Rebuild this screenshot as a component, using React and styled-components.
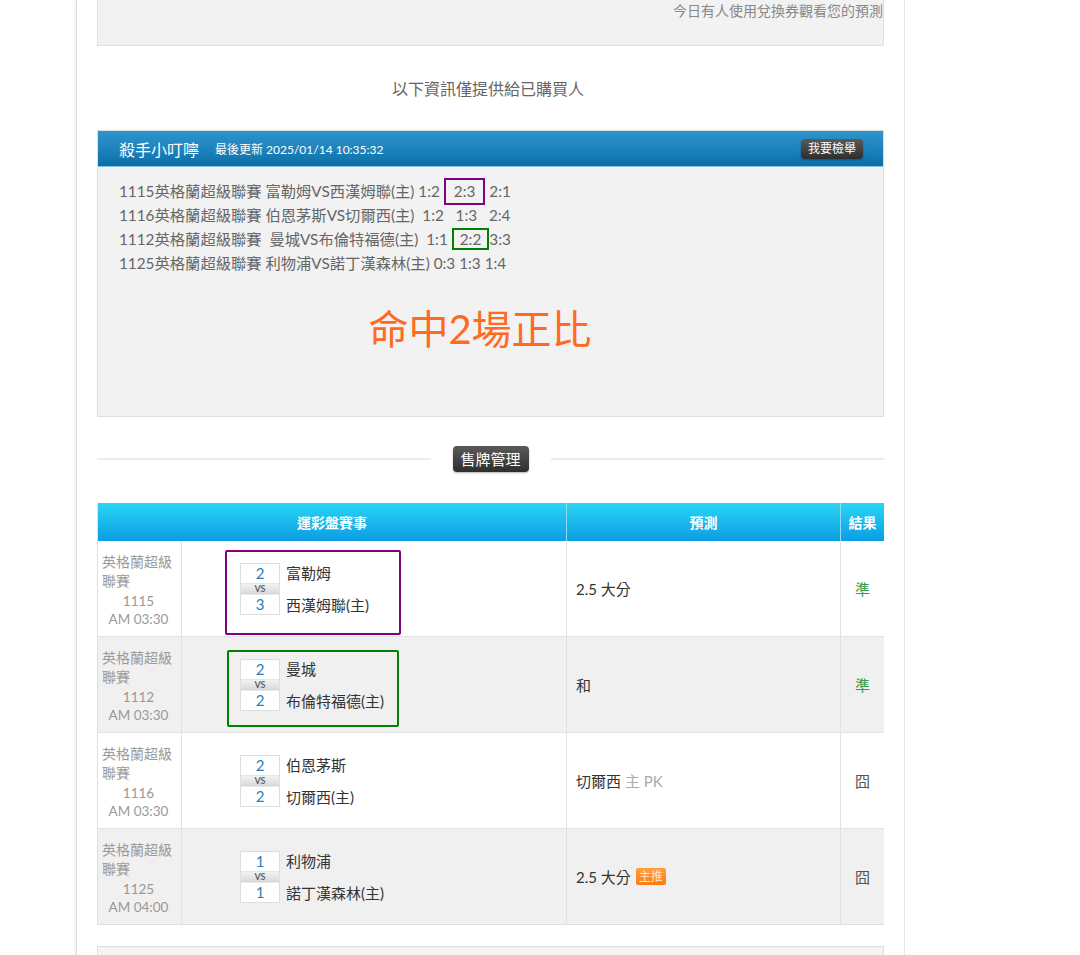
import React from "react";
import styled, { createGlobalStyle } from "styled-components";

const Global = createGlobalStyle`
  html, body { margin: 0; padding: 0; background: #fff; }
  body { font-family: Lato, "Noto Sans CJK TC", sans-serif; color: #333; }
`;

const Page = styled.div`
  width: 829px;
  margin-left: 76px;
  min-height: 955px;
  border-left: 1px solid #dcdcdc;
  border-right: 1px solid #e6e6e6;
  box-shadow: -2px 0 3px rgba(0,0,0,0.06);
  padding: 0 20px 0 20px;
  box-sizing: border-box;
  display: flex;
  flex-direction: column;
`;

const GrayBox = styled.div`
  background: #f2f2f2;
  border: 1px solid #e0e0e0;
  border-top: none;
  height: 46px;
  box-sizing: border-box;
  display: flex;
  justify-content: flex-end;
  padding: 0;
  font-size: 14px;
  line-height: 22px;
  color: #888;
`;

const Notice = styled.div`
  text-align: center;
  font-size: 16px;
  color: #666;
  margin-top: 32px;
  line-height: 22px;
  padding-right: 5px;
`;

const Panel = styled.div`
  margin-top: 30px;
  border: 1px solid #dedede;
  background: #f2f2f2;
  height: 287px;
  box-sizing: border-box;
`;

const PanelHead = styled.div`
  height: 35px;
  background: linear-gradient(#2c95cb, #1a80b9 60%, #0c6ea6);
  border-bottom: 1px solid #8cc3e0;
  display: flex;
  align-items: center;
  padding: 0 20px 0 21px;
  color: #fff;
`;

const PanelTitle = styled.span`
  font-size: 16px;
  margin-right: 16px;
`;

const Updated = styled.span`
  font-size: 12px;
  flex: 1;
`;

const DarkBtn = styled.span`
  display: inline-block;
  background: linear-gradient(#5a5a5a, #2e2e2e);
  color: #fff;
  border-radius: 4px;
  font-size: ${p => p.$big ? 15 : 12}px;
  line-height: ${p => p.$big ? 26 : 20}px;
  padding: 0 ${p => p.$big ? 8 : 7}px;
  box-shadow: 0 1px 2px rgba(0,0,0,0.3);
`;

const PanelBody = styled.div`
  padding: 12px 20px 0 21px;
  font-size: 15.3px;
  color: #666;
`;

const Line = styled.div`
  line-height: 24px;
  white-space: pre;
`;

const Mark = styled.span`
  display: inline-block;
  border: 2px solid ${p => p.$c};
  padding: 0 ${p => p.$pad || 7}px;
  line-height: ${p => p.$lh || 23}px;
  margin: -3px 0;
`;

const Hit = styled.div`
  text-align: center;
  color: #ff6a22;
  font-size: 40px;
  line-height: 50px;
  margin-top: 29px;
  margin-left: -22px;
`;

const Divider = styled.div`
  margin-top: 29px;
  display: flex;
  align-items: center;
  gap: 22px;
  &::before, &::after {
    content: "";
    flex: 1;
    height: 2px;
    background: #ececec;
  }
`;

const Table = styled.div`
  margin-top: 31px;
  display: grid;
  grid-template-columns: 83px 385px 274px 44px;
  border: 1px solid #dedede;
  border-top: none;
`;

const Th = styled.div`
  grid-column: span ${p => p.$span || 1};
  height: 38px;
  background: linear-gradient(#2ad6f4, #0b9de3);
  color: #fff;
  font-size: 14px;
  font-weight: bold;
  display: flex;
  align-items: center;
  justify-content: center;
  border-left: ${p => p.$first ? "none" : "1px solid #8fdcf5"};
`;

const Td = styled.div`
  height: 95px;
  background: ${p => p.$alt ? "#f0f0f0" : "#fff"};
  border-bottom: ${p => p.$last ? "none" : "1px solid #e2e2e2"};
  border-left: ${p => p.$first ? "none" : "1px solid #e2e2e2"};
  display: flex;
  align-items: center;
  justify-content: ${p => p.$center ? "center" : "flex-start"};
  padding-left: ${p => p.$pl || 0}px;
  box-sizing: content-box;
`;

const League = styled.div`
  font-size: 14px;
  color: #999;
  line-height: 19px;
  padding-left: 4px;
  width: 80px;
  margin-top: 3px;
`;

const Centered = styled.div`
  text-align: center;
  padding-right: 6px;
  font-size: 13.5px;
  line-height: 18px;
  margin-top: 2px;
`;

const MatchBox = styled.div`
  display: flex;
  align-items: center;
  gap: 6px;
  box-sizing: border-box;
  width: ${p => p.$w}px;
  height: ${p => p.$h}px;
  border: ${p => p.$c ? `2.5px solid ${p.$c}` : "2.5px solid transparent"};
  border-radius: 2px;
  padding-left: ${p => p.$pl}px;
  padding-bottom: 7px;
  margin-top: 7px;
  margin-left: ${p => p.$ml}px;
`;

const ScoreCol = styled.div`
  width: 38px;
  border: 1px solid #ddd;
  display: flex;
  flex-direction: column;
  background: #fff;
`;

const Score = styled.div`
  height: 19px;
  line-height: 19px;
  text-align: center;
  color: #2a7fba;
  font-size: 15px;
`;

const Vs = styled.div`
  height: 10px;
  line-height: 10px;
  text-align: center;
  font-size: 9px;
  font-weight: bold;
  color: #666;
  background: linear-gradient(#f2f2f2, #d8d8d8);
  border-top: 1px solid #e6e6e6;
  border-bottom: 1px solid #e6e6e6;
`;

const Teams = styled.div`
  display: flex;
  flex-direction: column;
  gap: 10px;
  font-size: 15px;
  color: #333;
  line-height: 22px;
`;

const Pred = styled.div`
  font-size: 15px;
  color: #333;
  display: flex;
  align-items: center;
  gap: 4px;
`;

const Sub = styled.span`
  color: #aaa;
`;

const Badge = styled.span`
  display: inline-block;
  background: linear-gradient(#ffa040, #ff7a10);
  color: #ffe9c8;
  font-size: 12px;
  line-height: 17px;
  padding: 0 3px;
  border-radius: 2px;
  margin-left: 1px;
`;

const Result = styled.span`
  font-size: 15px;
  color: ${p => p.$ok ? "#3a9a4a" : "#555"};
`;

const BottomBox = styled.div`
  margin-top: 21px;
  height: 20px;
  background: #f4f4f4;
  border: 1px solid #ddd;
  border-bottom: none;
`;

const rows = [
  { no: "1115", time: "AM 03:30", s1: 2, s2: 3, t1: "富勒姆", t2: "西漢姆聯(主)", pred: <>2.5 大分</>, ok: true, mark: "#800080", w: 176, h: 85, pl: 13, ml: 43 },
  { no: "1112", time: "AM 03:30", s1: 2, s2: 2, t1: "曼城", t2: "布倫特福德(主)", pred: <>和</>, ok: true, mark: "#008000", w: 172, h: 77, pl: 11, ml: 45 },
  { no: "1116", time: "AM 03:30", s1: 2, s2: 2, t1: "伯恩茅斯", t2: "切爾西(主)", pred: <>切爾西 <Sub>主 PK</Sub></>, ok: false, w: 172, h: 77, pl: 11, ml: 45 },
  { no: "1125", time: "AM 04:00", s1: 1, s2: 1, t1: "利物浦", t2: "諾丁漢森林(主)", pred: <>2.5 大分 <Badge>主推</Badge></>, ok: false, w: 172, h: 77, pl: 11, ml: 45 },
];

export default function App() {
  return (
    <>
      <Global />
      <Page>
        <GrayBox>今日有人使用兌換券觀看您的預測</GrayBox>
        <Notice>以下資訊僅提供給已購買人</Notice>
        <Panel>
          <PanelHead>
            <PanelTitle>殺手小叮嚀</PanelTitle>
            <Updated>最後更新 2025/01/14 10:35:32</Updated>
            <DarkBtn>我要檢舉</DarkBtn>
          </PanelHead>
          <PanelBody>
            <Line>1115英格蘭超級聯賽 富勒姆VS西漢姆聯(主) 1:2 <Mark $c="#800080" $pad={8}>2:3</Mark> 2:1</Line>
            <Line>1116英格蘭超級聯賽 伯恩茅斯VS切爾西(主)  1:2   1:3   2:4</Line>
            <Line>1112英格蘭超級聯賽  曼城VS布倫特福德(主)  1:1 <Mark $c="#008000" $pad={6} $lh={18}>2:2</Mark>3:3</Line>
            <Line>1125英格蘭超級聯賽 利物浦VS諾丁漢森林(主) 0:3 1:3 1:4</Line>
            <Hit>命中2場正比</Hit>
          </PanelBody>
        </Panel>
        <Divider><DarkBtn $big>售牌管理</DarkBtn></Divider>
        <Table>
          <Th $span={2} $first>運彩盤賽事</Th>
          <Th>預測</Th>
          <Th>結果</Th>
          {rows.map((r, i) => {
            const alt = i % 2 === 1;
            const last = i === rows.length - 1;
            return (
              <React.Fragment key={r.no}>
                <Td $alt={alt} $last={last} $first>
                  <League>
                    英格蘭超級<br />聯賽
                    <Centered>{r.no}<br />{r.time}</Centered>
                  </League>
                </Td>
                <Td $alt={alt} $last={last}>
                  <MatchBox $c={r.mark} $w={r.w} $h={r.h} $pl={r.pl} $ml={r.ml}>
                    <ScoreCol>
                      <Score>{r.s1}</Score>
                      <Vs>VS</Vs>
                      <Score>{r.s2}</Score>
                    </ScoreCol>
                    <Teams>
                      <span>{r.t1}</span>
                      <span>{r.t2}</span>
                    </Teams>
                  </MatchBox>
                </Td>
                <Td $alt={alt} $last={last} $pl={9}>
                  <Pred>{r.pred}</Pred>
                </Td>
                <Td $alt={alt} $last={last} $center>
                  <Result $ok={r.ok}>{r.ok ? "準" : "囧"}</Result>
                </Td>
              </React.Fragment>
            );
          })}
        </Table>
        <BottomBox />
      </Page>
    </>
  );
}
